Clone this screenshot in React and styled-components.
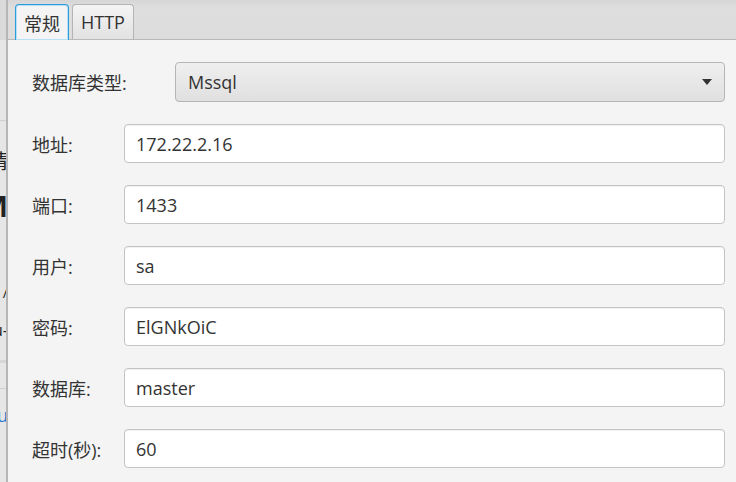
import React from "react";
import styled, { createGlobalStyle } from "styled-components";

const GlobalStyle = createGlobalStyle`
  html, body {
    margin: 0;
    padding: 0;
    background: #f4f4f4;
  }
  body {
    font-family: "Open Sans", "Noto Sans CJK SC", sans-serif;
    color: #333333;
  }
`;

const fields = [
  { label: "地址:", value: "172.22.2.16" },
  { label: "端口:", value: "1433" },
  { label: "用户:", value: "sa" },
  { label: "密码:", value: "ElGNkOiC" },
  { label: "数据库:", value: "master" },
  { label: "超时(秒):", value: "60" },
];

const App = () => {
  return (
    <>
      <GlobalStyle />
      <Screen>
        <Backdrop aria-hidden="true">
          <BackHeader />
          <BackLine $top={80} />
          <Fragment $top={31} $size={20}>请</Fragment>
          <Fragment $top={20} $size={28} $bold>M</Fragment>
          <Fragment $top={66} $size={14}>/</Fragment>
          <Fragment $top={22} $size={16}>u-</Fragment>
          <BackLine $top={22} $dark />
          <BackLine $top={25} />
          <Fragment $top={17} $size={18} $color="#2a7fd0">lu</Fragment>
        </Backdrop>
        <Dialog>
          <TabBar>
            <Tab $active>常规</Tab>
            <Tab>HTTP</Tab>
          </TabBar>
          <Content>
            <ComboRow>
              <ComboLabel>数据库类型:</ComboLabel>
              <Combo>
                <span>Mssql</span>
                <Arrow />
              </Combo>
            </ComboRow>
            {fields.map((f) => (
              <Row key={f.label}>
                <Label>{f.label}</Label>
                <Field>{f.value}</Field>
              </Row>
            ))}
          </Content>
        </Dialog>
      </Screen>
    </>
  );
};

const Screen = styled.div`
  display: flex;
  width: 736px;
  height: 482px;
  overflow: hidden;
`;

const Backdrop = styled.div`
  width: 6px;
  flex-shrink: 0;
  background: #e6e6e6;
  border-right: 2px solid #b6b6b6;
  display: flex;
  flex-direction: column;
  align-items: flex-end;
  overflow: hidden;
`;

const BackHeader = styled.div`
  align-self: stretch;
  flex-shrink: 0;
  height: 40px;
  background: #dadada;
`;

const BackLine = styled.div`
  align-self: stretch;
  flex-shrink: 0;
  height: ${(p) => (p.$dark ? 3 : 1)}px;
  margin-top: ${(p) => p.$top}px;
  background: ${(p) => (p.$dark ? "#d6d6d6" : "#d0d0d0")};
`;

const Fragment = styled.div`
  flex-shrink: 0;
  margin-top: ${(p) => p.$top}px;
  font-size: ${(p) => p.$size}px;
  font-weight: ${(p) => (p.$bold ? 700 : 400)};
  color: ${(p) => p.$color || "#222"};
  line-height: 1;
  white-space: nowrap;
  margin-right: -2px;
`;

const Dialog = styled.div`
  flex: 1;
  display: flex;
  flex-direction: column;
  background: #f4f4f4;
`;

const TabBar = styled.div`
  height: 39px;
  background: linear-gradient(#d6d6d6, #dedede 20%, #dcdcdc);
  border-bottom: 1px solid #b9b9b9;
  display: flex;
  align-items: flex-end;
  gap: 3px;
  padding-left: 7px;
`;

const Tab = styled.div`
  height: ${(p) => (p.$active ? "36px" : "35px")};
  margin-bottom: ${(p) => (p.$active ? "-1px" : "0")};
  padding: 0 8px;
  box-sizing: border-box;
  display: flex;
  align-items: center;
  font-size: 18px;
  border-radius: 4px 4px 0 0;
  border: 1px solid ${(p) => (p.$active ? "#2a9ddc" : "#b4b4b4")};
  border-bottom: none;
  background: ${(p) =>
    p.$active ? "#f4f4f4" : "linear-gradient(#f4f4f4, #e2e2e2)"};
  box-shadow: ${(p) =>
    p.$active ? "inset 0 0 0 1px rgba(140, 210, 245, 0.6)" : "none"};
`;

const Content = styled.div`
  display: flex;
  flex-direction: column;
  gap: 22px;
  padding: 22px 11px 0 24px;
`;

const ComboRow = styled.div`
  display: flex;
  align-items: center;
`;

const ComboLabel = styled.div`
  width: 143px;
  font-size: 18px;
`;

const Combo = styled.div`
  flex: 1;
  height: 40px;
  box-sizing: border-box;
  border: 1px solid #b5b5b5;
  border-radius: 4px;
  background: linear-gradient(#efefef, #e0e0e0);
  display: flex;
  align-items: center;
  justify-content: space-between;
  padding: 0 12px;
  font-size: 18px;
`;

const Arrow = styled.div`
  width: 0;
  height: 0;
  border-left: 5px solid transparent;
  border-right: 5px solid transparent;
  border-top: 6px solid #333;
`;

const Row = styled.div`
  display: flex;
  align-items: center;
`;

const Label = styled.div`
  width: 92px;
  font-size: 18px;
`;

const Field = styled.div`
  flex: 1;
  height: 39px;
  box-sizing: border-box;
  border: 1px solid #c4c4c4;
  border-radius: 4px;
  background: #ffffff;
  box-shadow: inset 0 1px 1px rgba(0, 0, 0, 0.06);
  display: flex;
  align-items: center;
  padding: 0 11px;
  font-size: 18px;
`;

export default App;
